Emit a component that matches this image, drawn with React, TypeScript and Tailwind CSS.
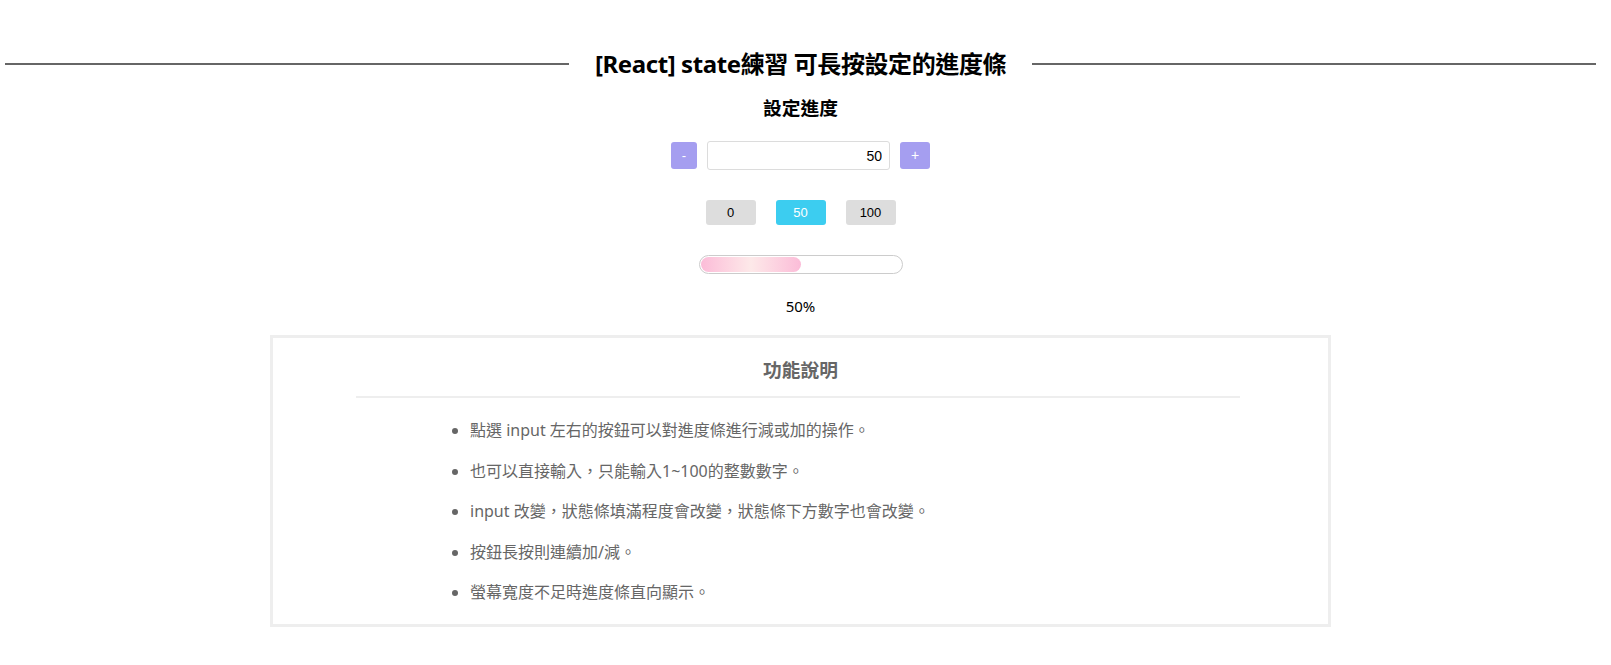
import { useEffect, useRef, useState } from "react";

const presets = [0, 50, 100];

const notes = [
  "點選 input 左右的按鈕可以對進度條進行減或加的操作。",
  "也可以直接輸入，只能輸入1~100的整數數字。",
  "input 改變，狀態條填滿程度會改變，狀態條下方數字也會改變。",
  "按鈕長按則連續加/減。",
  "螢幕寬度不足時進度條直向顯示。",
];

function clamp(n: number) {
  if (Number.isNaN(n)) return 0;
  return Math.min(100, Math.max(0, Math.round(n)));
}

// 長按時連續加/減
function useHold(step: number, setValue: (fn: (v: number) => number) => void) {
  const timer = useRef<number | null>(null);
  const repeat = useRef<number | null>(null);

  const stop = () => {
    if (timer.current) window.clearTimeout(timer.current);
    if (repeat.current) window.clearInterval(repeat.current);
    timer.current = null;
    repeat.current = null;
  };

  const start = () => {
    setValue((v) => clamp(v + step));
    timer.current = window.setTimeout(() => {
      repeat.current = window.setInterval(() => {
        setValue((v) => clamp(v + step));
      }, 60);
    }, 400);
  };

  useEffect(() => stop, []);

  return {
    onMouseDown: start,
    onMouseUp: stop,
    onMouseLeave: stop,
    onTouchStart: start,
    onTouchEnd: stop,
  };
}

export default function App() {
  const [value, setValue] = useState(50);
  const minus = useHold(-1, setValue);
  const plus = useHold(1, setValue);

  return (
    <div className="min-h-screen bg-white pl-[5px] pr-[15px] pt-[49px] pb-10 font-['Noto_Sans','Noto_Sans_CJK_TC',sans-serif] text-black">
      {/* 標題 */}
      <div className="flex h-[30px] items-center">
        <div className="h-[2px] flex-1 bg-[#666]" />
        <h2 className="px-[26px] text-[24px] font-bold leading-[30px] tracking-[-0.4px]">
          [React] state練習 可長按設定的進度條
        </h2>
        <div className="h-[2px] flex-1 bg-[#666]" />
      </div>

      <h3 className="mt-[17px] text-center text-[18.72px] font-bold leading-[24px]">
        設定進度
      </h3>

      {/* 加減與輸入 */}
      <div className="mt-[21px] flex items-center justify-center gap-[10px]">
        <button
          {...minus}
          className="h-[27px] w-[26px] rounded-[3px] bg-[#a59ef0] font-['Liberation_Sans',sans-serif] text-[13px] text-white"
        >
          -
        </button>
        <input
          value={value}
          onChange={(e) => setValue(clamp(parseInt(e.target.value || "0", 10)))}
          className="h-[29px] w-[183px] rounded-[3px] border border-[#dcdcdc] px-[7px] text-right font-['Liberation_Sans',sans-serif] text-[14px] outline-none"
        />
        <button
          {...plus}
          className="h-[27px] w-[30px] rounded-[3px] bg-[#a59ef0] font-['Liberation_Sans',sans-serif] text-[14px] text-white"
        >
          +
        </button>
      </div>

      {/* 快速設定 */}
      <div className="mt-[30px] flex justify-center gap-[20px]">
        {presets.map((p) => (
          <button
            key={p}
            onClick={() => setValue(p)}
            className={`h-[25px] w-[50px] rounded-[3px] font-['Liberation_Sans',sans-serif] text-[13px] ${
              value === p ? "bg-[#3ccdf0] text-white" : "bg-[#dddddd] text-black"
            }`}
          >
            {p}
          </button>
        ))}
      </div>

      {/* 進度條 */}
      <div className="mt-[30px] flex justify-center">
        <div className="h-[19px] w-[204px] rounded-full border border-[#cccccc] p-px">
          <div
            className="h-full rounded-full bg-linear-to-r from-[#fbbcd8] via-[#fde9e9] to-[#fbbcd8]"
            style={{ width: `${value}%` }}
          />
        </div>
      </div>

      <p className="mt-[22px] text-center text-[15px] leading-[20px]">{value}%</p>

      {/* 功能說明 */}
      <div className="mx-auto mt-[19px] w-[1061px] border-[3px] border-[#eeeeee] pt-[20px] pb-[20px]">
        <h3 className="text-center text-[18.72px] font-semibold leading-[24px] text-[#666]">
          功能說明
        </h3>
        <div className="mx-auto mt-[14px] h-[2px] w-[884px] -translate-x-[3px] bg-[#eeeeee]" />
        <ul className="mt-[20px] flex list-disc flex-col gap-[16.5px] pl-[197px] text-[16px] leading-[24px] text-[#666]">
          {notes.map((n) => (
            <li key={n} className="marker:text-[#666]">
              {n}
            </li>
          ))}
        </ul>
      </div>
    </div>
  );
}
